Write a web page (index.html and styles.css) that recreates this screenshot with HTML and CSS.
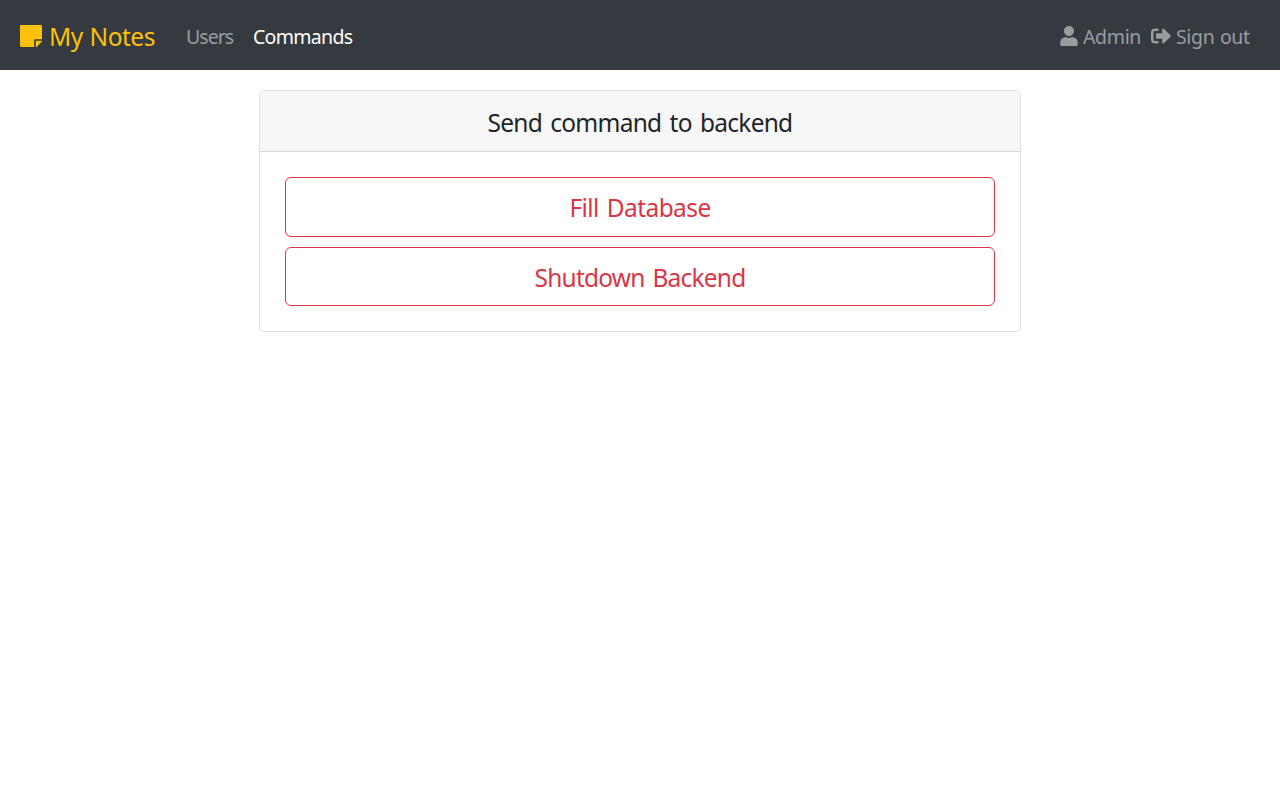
FILE: index.html
```html
<!DOCTYPE html>
<html lang="en">
<head>
<meta charset="utf-8">
<title>My Notes</title>
<link rel="stylesheet" href="styles.css">
</head>
<body>
<nav class="navbar">
  <a class="brand"><svg class="icon-note" viewBox="0 32 448 448"><path d="M312 320h136V56c0-13.300-10.700-24-24-24H24C10.700 32 0 42.700 0 56v400c0 13.300 10.700 24 24 24h264V344c0-13.200 10.800-24 24-24zm129 55l-98 98c-4.500 4.500-10.600 7-17 7h-6V352h128v6.100c0 6.300-2.500 12.400-7 16.900z"/></svg><span class="brand-text">My Notes</span></a>
  <a class="link users"><span>Users</span></a>
  <a class="link commands"><span>Commands</span></a>
  <div class="account">
    <a class="link admin"><svg class="icon-user" viewBox="0 0 448 512"><path d="M224 256c70.700 0 128-57.300 128-128S294.700 0 224 0 96 57.300 96 128s57.300 128 128 128zm89.600 32h-16.700c-22.200 10.200-46.900 16-72.900 16s-50.600-5.800-72.900-16h-16.700C60.200 288 0 348.200 0 422.400V464c0 26.500 21.500 48 48 48h352c26.500 0 48-21.500 48-48v-41.600c0-74.200-60.200-134.400-134.400-134.400z"/></svg><span>Admin</span></a>
    <a class="link signout"><svg class="icon-out" viewBox="0 0 512 512"><path d="M497 273L329 441c-15 15-41 4.500-41-17v-96H152c-13.300 0-24-10.700-24-24v-96c0-13.300 10.700-24 24-24h136V88c0-21.400 25.900-32 41-17l168 168c9.300 9.400 9.300 24.600 0 34zM192 436v-40c0-6.600-5.400-12-12-12H96c-17.700 0-32-14.300-32-32V160c0-17.700 14.300-32 32-32h84c6.600 0 12-5.400 12-12V76c0-6.600-5.400-12-12-12H96c-53 0-96 43-96 96v192c0 53 43 96 96 96h84c6.600 0 12-5.400 12-12z"/></svg><span>Sign out</span></a>
  </div>
</nav>
<main class="card">
  <h1 class="card-header">Send command to backend</h1>
  <div class="card-body">
    <button class="btn fill">Fill Database</button>
    <button class="btn shutdown">Shutdown Backend</button>
  </div>
</main>
</body>
</html>
```
FILE: styles.css
```css
* { box-sizing: border-box; }
body { margin: 0; background: #fff; color: #212529; font-family: "Segoe UI", "Noto Sans", "Open Sans", sans-serif; font-size: 19.5px; line-height: 30px; }
svg { fill: currentColor; flex: none; }
.navbar { display: flex; align-items: center; height: 70px; padding: 4px 30px 0 20px; background: #343a40; }
.brand { display: flex; align-items: center; width: 166px; color: #ffc107; font-size: 24.5px; gap: 7px; white-space: nowrap; }
.icon-note { width: 22px; height: 22px; margin-top: -2px; }
.link { display: flex; align-items: center; gap: 5px; color: rgba(255,255,255,.5); white-space: nowrap; }
.users { width: 67px; letter-spacing: -.95px; }
.commands { color: #fff; letter-spacing: -.7px; }
.account { display: flex; gap: 10px; margin-left: auto; }
.admin { width: 81px; letter-spacing: -.35px; }
.signout { width: 99px; letter-spacing: -.35px; word-spacing: .8px; }
.icon-user { width: 18px; height: 20px; margin-top: -2px; }
.icon-out { width: 20px; height: 20px; margin-top: -2px; }
.brand-text { letter-spacing: -.5px; word-spacing: 1px; }
.card { width: 762px; margin: 20px auto 0; border: 1px solid rgba(0,0,0,.125); border-radius: 5px; overflow: hidden; }
.card-header { margin: 0; height: 61px; padding-top: 4px; border-bottom: 1px solid rgba(0,0,0,.125); background: #f7f7f7; font-size: 24.5px; font-weight: 400; line-height: 56px; letter-spacing: -.75px; word-spacing: 2.600px; text-align: center; }
.card-body { display: flex; flex-direction: column; gap: 10px; padding: 25px; }
.btn { height: 60px; padding: 1px 0 0; border: 1px solid #dc3545; border-radius: 6px; background: transparent; color: #dc3545; font: 24.5px/50px "Segoe UI", "Noto Sans", "Open Sans", sans-serif; letter-spacing: -.6px; word-spacing: 2.400px; }
.shutdown { height: 59px; padding-top: 2px; letter-spacing: -.8px; }
```
